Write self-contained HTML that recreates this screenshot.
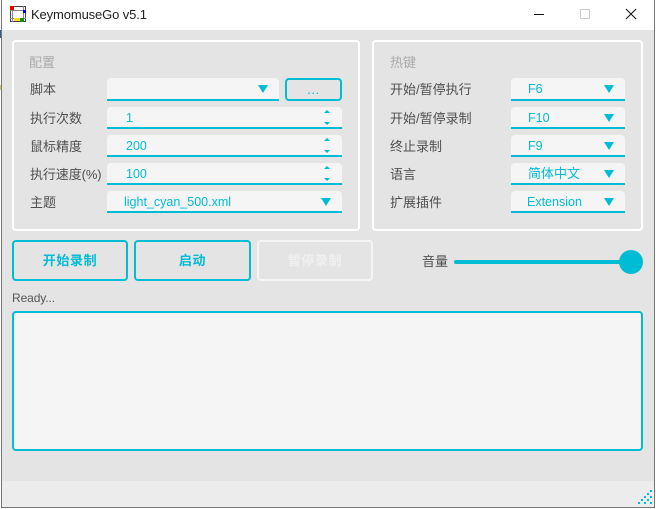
<!DOCTYPE html>
<html><head><meta charset="utf-8">
<style>
html,body{margin:0;padding:0;width:656px;height:509px;overflow:hidden;background:#fff}
body{position:relative;font-family:"Liberation Sans","Noto Sans CJK SC",sans-serif;font-size:13px;color:#4f4f4f}
div{position:absolute;box-sizing:border-box;white-space:nowrap}
.panel{border:2px solid #fff;border-radius:4px}
.l{line-height:18px;height:18px;font-size:13px}
.f{background:#f5f5f5;border-bottom:2px solid #00bcd4;border-radius:4px 4px 0 0;color:#00bcd4;line-height:22px;padding-left:19px;font-size:12.5px}
.t{position:absolute;width:0;height:0;border-left:5px solid transparent;border-right:5px solid transparent;border-top:8px solid #00bcd4;top:6px}
.u,.d{position:absolute;width:0;height:0;border-left:3px solid transparent;border-right:3px solid transparent;right:12px}
.u{border-bottom:3px solid #00bcd4;top:3px}
.d{border-top:3px solid #00bcd4;top:15px}
.b{border:2px solid #00bcd4;border-radius:4px;color:#00bcd4;font-weight:bold;text-align:center;font-size:13px;letter-spacing:.6px}
</style></head><body>
<div style="left:0;top:0;width:656px;height:509px;background:#fff"></div>
<div style="left:1px;top:30px;width:654px;height:451px;background:#e4e4e4"></div>
<div style="left:1px;top:481px;width:654px;height:27px;background:#ececec"></div>
<div style="left:1px;top:0;width:1px;height:508px;background:#777"></div>
<div style="left:654px;top:0;width:1px;height:508px;background:#777"></div>
<div style="left:1px;top:507px;width:654px;height:1px;background:#777"></div>
<div style="left:0;top:30px;width:1px;height:8px;background:#2a5a90"></div>
<div style="left:0;top:85px;width:1px;height:5px;background:#d8c860"></div>

<svg style="position:absolute;left:10px;top:5px" width="17" height="18" viewBox="0 0 17 18">
<rect x=".5" y="1.500" width="15" height="15" fill="#fff" stroke="#444"/>
<path d="M0 5.500H16M0 13.500H16M2.500 1V17M13.500 1V17" stroke="#888" stroke-width="1" fill="none"/>
<rect x="0" y="1" width="4" height="4" fill="#e00000"/>
<rect x="13" y="5" width="3" height="3" fill="#0000e0"/>
<rect x="4" y="13" width="6" height="3" fill="#f0e020"/>
<rect x="10" y="13" width="4" height="4" fill="#109010"/>
</svg>
<div style="left:31px;top:6px;height:18px;line-height:18px;font-size:13px;color:#222;letter-spacing:-.12px">KeymomuseGo v5.1</div>
<svg style="position:absolute;left:530px;top:5px" width="115" height="20" viewBox="0 0 115 20">
<path d="M4 9.500H14" stroke="#111" fill="none"/>
<rect x="50.500" y="4.500" width="9" height="9" fill="none" stroke="#ccc"/>
<path d="M96 4L106 14M106 4L96 14" stroke="#111" fill="none"/>
</svg>

<div class="panel" style="left:12px;top:40px;width:348px;height:191px"></div>
<div class="panel" style="left:372px;top:40px;width:271px;height:191px"></div>

<div class="l" style="left:29px;top:54px;color:#aaa">配置</div>
<div class="l" style="left:30px;top:81px">脚本</div>
<div class="l" style="left:30px;top:110px">执行次数</div>
<div class="l" style="left:30px;top:138px">鼠标精度</div>
<div class="l" style="left:30px;top:166px;letter-spacing:-.1px">执行速度(%)</div>
<div class="l" style="left:30px;top:194px">主题</div>

<div class="f" style="left:107px;top:78px;width:172px;height:23px"><span class="t" style="left:151px;top:7px"></span></div>
<div class="b" style="left:285px;top:78px;width:57px;height:23px;font-weight:normal;line-height:20px;font-size:13px">...</div>
<div class="f" style="left:107px;top:107px;width:235px;height:22px">1<span class="u"></span><span class="d"></span></div>
<div class="f" style="left:107px;top:135px;width:235px;height:22px">200<span class="u"></span><span class="d"></span></div>
<div class="f" style="left:107px;top:163px;width:235px;height:22px">100<span class="u"></span><span class="d"></span></div>
<div class="f" style="left:107px;top:191px;width:235px;height:22px;padding-left:17px">light_cyan_500.xml<span class="t" style="left:214px;top:7px"></span></div>

<div class="l" style="left:390px;top:54px;color:#aaa">热键</div>
<div class="l" style="left:390px;top:81px">开始/暂停执行</div>
<div class="l" style="left:390px;top:110px">开始/暂停录制</div>
<div class="l" style="left:390px;top:138px">终止录制</div>
<div class="l" style="left:390px;top:166px">语言</div>
<div class="l" style="left:390px;top:194px">扩展插件</div>

<div class="f" style="left:511px;top:78px;width:114px;height:23px;padding-left:17px">F6<span class="t" style="left:93px;top:7px"></span></div>
<div class="f" style="left:511px;top:107px;width:114px;height:22px;padding-left:17px">F10<span class="t" style="left:93px;top:7px"></span></div>
<div class="f" style="left:511px;top:135px;width:114px;height:22px;padding-left:17px">F9<span class="t" style="left:93px;top:7px"></span></div>
<div class="f" style="left:511px;top:163px;width:114px;height:22px;padding-left:17px;font-size:13px">简体中文<span class="t" style="left:93px;top:7px"></span></div>
<div class="f" style="left:511px;top:191px;width:114px;height:22px;padding-left:16px">Extension<span class="t" style="left:93px;top:7px"></span></div>

<div class="b" style="left:12px;top:240px;width:116px;height:41px;line-height:37px">开始录制</div>
<div class="b" style="left:134px;top:240px;width:117px;height:41px;line-height:37px">启动</div>
<div class="b" style="left:257px;top:240px;width:116px;height:41px;line-height:37px;border-color:#f5f5f5;color:#f0f0f0">暂停录制</div>

<div class="l" style="left:422px;top:253px">音量</div>
<div style="left:454px;top:260px;width:170px;height:4px;background:#00bcd4;border-radius:2px"></div>
<div style="left:619px;top:250px;width:24px;height:24px;background:#00bcd4;border-radius:50%"></div>

<div style="left:12px;top:290px;height:16px;line-height:16px;font-size:12px;color:#555;letter-spacing:-.1px">Ready...</div>
<div style="left:12px;top:311px;width:631px;height:140px;background:#f5f5f5;border:2px solid #00bcd4;border-radius:4px"></div>

<svg style="position:absolute;left:636px;top:488px" width="18" height="18" viewBox="0 0 18 18">
<g fill="#00bcd4"><rect x="14" y="2" width="2" height="2"/><rect x="11" y="5" width="2" height="2"/><rect x="8" y="8" width="2" height="2"/><rect x="14" y="8" width="2" height="2"/><rect x="5" y="11" width="2" height="2"/><rect x="11" y="11" width="2" height="2"/><rect x="2" y="14" width="2" height="2"/><rect x="8" y="14" width="2" height="2"/><rect x="14" y="14" width="2" height="2"/></g>
</svg>
</body></html>
